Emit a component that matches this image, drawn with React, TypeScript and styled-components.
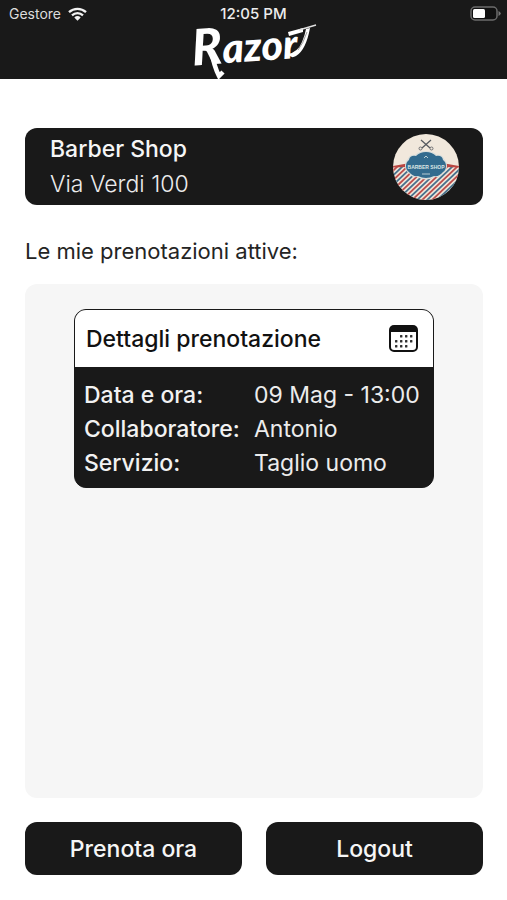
import React from "react";
import styled, { createGlobalStyle } from "styled-components";

const ink = "#191919";

const GlobalStyle = createGlobalStyle`
  *, *::before, *::after { box-sizing: border-box; }
  body {
    margin: 0;
    background: #fff;
    font-family: Inter, "Liberation Sans", sans-serif;
  }
`;

const Page = styled.div`
  display: flex;
  flex-direction: column;
  min-height: 100vh;
`;

const Header = styled.header`
  display: flex;
  flex-direction: column;
  align-items: center;
  height: 79px;
  background: ${ink};
  color: #fff;
`;

const StatusBar = styled.div`
  display: grid;
  grid-template-columns: 1fr auto 1fr;
  align-items: center;
  width: 100%;
  height: 23px;
  padding: 4px 6px 0;
  line-height: 18px;
`;

const Carrier = styled.span`
  display: flex;
  align-items: center;
  gap: 7px;
  padding-left: 3px;
  font-size: 14px;
  color: #dcdcdc;
`;

const Clock = styled.time`
  font-size: 15px;
  font-weight: 500;
  color: #ececec;
`;

const BatterySlot = styled.span`
  display: flex;
  justify-content: flex-end;
`;

const Main = styled.main`
  flex: 1;
  display: flex;
  flex-direction: column;
  padding: 49px 24px 25px 25px;
`;

const ShopCard = styled.section`
  display: flex;
  align-items: center;
  justify-content: space-between;
  height: 77px;
  padding: 1px 24px 0 25px;
  border-radius: 12px;
  background: ${ink};
`;

const ShopName = styled.h1`
  margin: 0;
  font-size: 23px;
  font-weight: 500;
  line-height: 35px;
  color: #f6f6f6;
`;

const ShopAddress = styled.p`
  margin: 0;
  font-size: 23px;
  font-weight: 300;
  line-height: 35px;
  color: #ececec;
`;

const SectionTitle = styled.h2`
  margin: 29px 0 16px;
  font-size: 22px;
  font-weight: 400;
  line-height: 34px;
  color: #242424;
`;

const BookingList = styled.section`
  flex: 1;
  padding: 25px;
  border-radius: 12px;
  background: #f6f6f6;
`;

const BookingCard = styled.article`
  max-width: 360px;
  margin: 0 auto;
  overflow: hidden;
  border: 1px solid ${ink};
  border-radius: 12px;
  background: ${ink};
`;

const BookingHeader = styled.div`
  display: flex;
  align-items: center;
  justify-content: space-between;
  height: 57px;
  padding: 1px 15px 0 11px;
  background: #fff;
`;

const BookingTitle = styled.h3`
  margin: 0;
  font-size: 23px;
  font-weight: 500;
  line-height: 34px;
  color: #111;
`;

const Details = styled.dl`
  display: grid;
  grid-template-columns: 170px 1fr;
  row-gap: 1px;
  margin: 0;
  padding: 12px 8px 7px 9px;
  font-size: 23px;
  line-height: 33px;
  white-space: nowrap;
`;

const Term = styled.dt`
  font-weight: 500;
  color: #f2f2f2;
`;

const Value = styled.dd`
  margin: 0;
  color: #ececec;
`;

const Actions = styled.div`
  display: grid;
  grid-template-columns: 1fr 1fr;
  gap: 24px;
  margin-top: 24px;
`;

const ActionButton = styled.button`
  height: 53px;
  border: 0;
  border-radius: 12px;
  background: ${ink};
  color: #f6f6f6;
  font: 500 23px/34px Inter, "Liberation Sans", sans-serif;
  cursor: pointer;
`;

const LogoDrawing = styled.svg`
  overflow: visible;
`;

const Wordmark = styled.text`
  font-family: Lato, sans-serif;
  font-weight: 900;
  font-style: italic;
  fill: #fff;
`;

const EmblemText = styled.text`
  font-family: "Liberation Sans Narrow", "Liberation Sans", sans-serif;
  font-weight: 700;
  fill: #dce6e4;
  text-anchor: middle;
`;

const WifiIcon = () => (
  <svg width="19" height="14" viewBox="0 0 19 14" aria-hidden="true">
    <g fill="none" stroke="#f2f2f2" strokeWidth="2.300">
      <path d="M1 5.200C5.800.7 13.200.7 18 5.200" />
      <path d="M4 8.300C7.200 5.300 11.800 5.300 15 8.300" />
    </g>
    <path d="M6.300 10.500Q9.500 7.700 12.700 10.500L9.500 13.800Z" fill="#f2f2f2" />
  </svg>
);

const BatteryIcon = () => (
  <svg width="31" height="15" viewBox="0 0 31 15" aria-label="Batteria">
    <rect x="1" y="1" width="26" height="13" rx="4" fill="#111" stroke="#6c6c6c" strokeWidth="1.500" />
    <rect x="3" y="3" width="12" height="9" rx="1.500" fill="#fff" />
    <path d="M28.500 5Q33 7.500 28.500 10Z" fill="#777" />
  </svg>
);

const RazorLogo = () => (
  <LogoDrawing width="126" height="56" viewBox="0 0 126 56" role="img" aria-label="Razor">
    <g transform="rotate(-4 8 42)">
      <Wordmark x="2" y="42" fontSize="41">
        <tspan fontSize="50">R</tspan>azor
      </Wordmark>
    </g>
    <path d="M20 27Q23 43 28 53L32 49" fill="none" stroke="#fff" strokeWidth="4.500" />
    <path d="M97 9L112 5L112 9L98 13Z" fill="#fff" />
    <path d="M108 7L125 2" stroke="#e0e0e0" strokeWidth="1.500" />
    <path d="M119 5Q115 27 105 33Q100 36 97 31Q107 29 111 19Q114 12 115 6Z" fill="#fff" />
    <path d="M116 9Q112 21 107 27" fill="none" stroke="#777" strokeWidth=".7" />
  </LogoDrawing>
);

const stripes = Array.from({ length: 22 }, (_, i) => i);

const ShopEmblem = () => (
  <svg width="66" height="66" viewBox="0 0 66 66" role="img" aria-label="Barber Shop">
    <defs>
      <clipPath id="emblem-disc"><circle cx="33" cy="33" r="33" /></clipPath>
      <clipPath id="emblem-stripes"><rect y="33" width="66" height="33" /></clipPath>
    </defs>
    <g clipPath="url(#emblem-disc)">
      <rect width="66" height="66" fill="#f1e8dc" />
      <g clipPath="url(#emblem-stripes)" strokeWidth="1.800">
        {stripes.map((i) => (
          <path
            key={i}
            d={`M${i * 5 - 38} 68L${i * 5} 32`}
            stroke={i % 2 ? "#bd4e4b" : "#47718d"}
          />
        ))}
      </g>
      <path d="M0 32L14 29.500L14 33L0 33.500ZM66 32L52 29.500L52 33L66 33.500Z" fill="#b94742" />
      <path d="M33 17Q40 17 44 21Q49 20 51 25Q54 27 54 32Q54 37 50 39Q47 44 42 43Q33 48 24 43Q18 44 16 39Q12 37 12 32Q12 27 15 25Q17 20 22 21Q26 17 33 17Z" fill="#d9dedb" />
      <path d="M33 18Q39 18 43 22Q49 21 50 26Q53 28 53 32Q53 36 50 38Q46 43 41 42Q33 46 25 42Q20 43 16 38Q13 36 13 32Q13 28 16 26Q17 21 23 22Q27 18 33 18Z" fill="#326b8e" />
      <EmblemText x="33" y="35" fontSize="5">BARBER SHOP</EmblemText>
      <path d="M31 24L33 22L35 24M29 40H37" fill="none" stroke="#b8cdd2" />
      <g fill="none" stroke="#575b60">
        <path d="M28 6L37 14M38 6L29 14" strokeWidth="1.300" />
        <circle cx="27.500" cy="14.500" r="1.500" strokeWidth=".8" />
        <circle cx="38.500" cy="14.500" r="1.500" strokeWidth=".8" />
      </g>
    </g>
  </svg>
);

const calendarDots = [
  [12, 11], [17, 11], [22, 11],
  [7, 16], [12, 16], [17, 16], [22, 16],
  [7, 21], [12, 21], [17, 21],
];

const CalendarIcon = () => (
  <svg width="29" height="28" viewBox="0 0 29 28" aria-hidden="true">
    <rect x="1" y="1" width="27" height="25" rx="4" fill="#fff" stroke="#111" strokeWidth="2" />
    <path d="M1 7V4Q1 1 4 1H25Q28 1 28 4V7Z" fill="#111" />
    {calendarDots.map(([x, y]) => (
      <rect key={`${x}-${y}`} x={x - 1} y={y - 1} width="2.400" height="2.400" rx=".5" fill="#333" />
    ))}
  </svg>
);

const booking = [
  ["Data e ora:", "09 Mag - 13:00"],
  ["Collaboratore:", "Antonio"],
  ["Servizio:", "Taglio uomo"],
];

export default function App() {
  return (
    <Page>
      <GlobalStyle />
      <Header>
        <StatusBar>
          <Carrier>Gestore <WifiIcon /></Carrier>
          <Clock>12:05 PM</Clock>
          <BatterySlot><BatteryIcon /></BatterySlot>
        </StatusBar>
        <RazorLogo />
      </Header>
      <Main>
        <ShopCard>
          <div>
            <ShopName>Barber Shop</ShopName>
            <ShopAddress>Via Verdi 100</ShopAddress>
          </div>
          <ShopEmblem />
        </ShopCard>
        <SectionTitle>Le mie prenotazioni attive:</SectionTitle>
        <BookingList>
          <BookingCard>
            <BookingHeader>
              <BookingTitle>Dettagli prenotazione</BookingTitle>
              <CalendarIcon />
            </BookingHeader>
            <Details>
              {booking.map(([term, value]) => (
                <React.Fragment key={term}>
                  <Term>{term}</Term>
                  <Value>{value}</Value>
                </React.Fragment>
              ))}
            </Details>
          </BookingCard>
        </BookingList>
        <Actions>
          <ActionButton type="button">Prenota ora</ActionButton>
          <ActionButton type="button">Logout</ActionButton>
        </Actions>
      </Main>
    </Page>
  );
}
